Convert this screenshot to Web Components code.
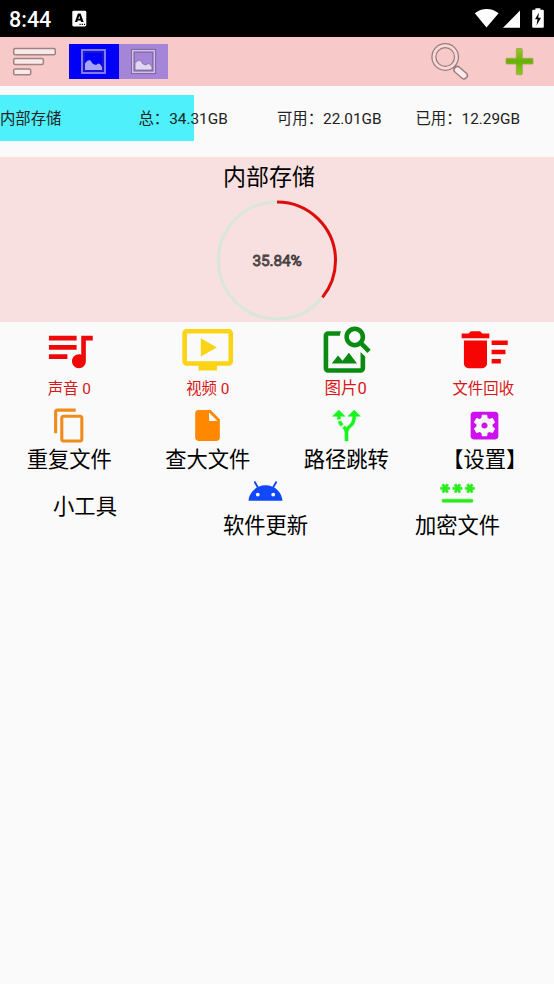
<!DOCTYPE html>
<html lang="zh-CN">
<head>
<meta charset="utf-8">
<title>内部存储</title>
<style>
body{margin:0;background:#fafafa;color:#111;font-family:Roboto,"Noto Sans CJK SC",sans-serif;}
</style>
</head>
<body>
<storage-app></storage-app>
<script>
const define=(name,html,setup)=>customElements.define(name,class extends HTMLElement{
  constructor(){super();this.attachShadow({mode:'open'}).innerHTML=html;}
  connectedCallback(){if(setup)setup(this,this.shadowRoot);}
});

const ICONS={
music:'<path d="M15 6H3v2h12V6zm0 4H3v2h12v-2zM3 16h8v-2H3v2zM17 6v8.18c-.31-.11-.65-.18-1-.18-1.66 0-3 1.34-3 3s1.34 3 3 3 3-1.34 3-3V8h3V6h-5z"/>',
video:'<path d="M21 3H3c-1.11 0-2 .89-2 2v12c0 1.1.89 2 2 2h5v2h8v-2h5c1.1 0 1.99-.9 1.99-2L23 5c0-1.1-.9-2-2-2zm0 14H3V5h18v12zm-5-6l-7 4V7z"/>',
image:'<path d="M18 13v7H4V6h5.02c.05-.71.22-1.38.48-2H4c-1.1 0-2 .9-2 2v14c0 1.1.9 2 2 2h14c1.1 0 2-.9 2-2v-5l-2-2zm-1.5 5h-11l2.75-3.53 1.96 2.36 2.75-3.54zm2.8-9.11c.44-.7.7-1.51.7-2.39C20 4.01 17.99 2 15.5 2S11 4.01 11 6.5s2.01 4.5 4.49 4.5c.88 0 1.7-.26 2.39-.7L21 13.42 22.42 12 19.3 8.89zM15.5 9C14.12 9 13 7.88 13 6.5S14.12 4 15.5 4 18 5.12 18 6.5 16.88 9 15.5 9z"/>',
sweep:'<path d="M15 16h4v2h-4zm0-8h7v2h-7zm0 4h6v2h-6zM3 18c0 1.1.9 2 2 2h6c1.1 0 2-.9 2-2V8H3v10zM14 5h-3l-1-1H6L5 5H2v2h12z"/>',
copy:'<path d="M16 1H4c-1.1 0-2 .9-2 2v14h2V3h12V1zm3 4H8c-1.1 0-2 .9-2 2v14c0 1.1.9 2 2 2h11c1.1 0 2-.9 2-2V7c0-1.1-.9-2-2-2zm0 16H8V7h11v14z"/>',
file:'<path d="M6 2c-1.1 0-1.99.9-1.99 2L4 20c0 1.1.89 2 1.99 2H18c1.1 0 2-.9 2-2V8l-6-6H6zm7 7V3.5L18.5 9H13z"/>',
route:'<path stroke="#16f51c" stroke-width=".35" d="M9.78 11.16l-1.42 1.42c-.68-.69-1.34-1.58-1.79-2.94l1.94-.49c.32.89.77 1.5 1.27 2.01zM11 6L7 2 3 6h3.02c.02.81.08 1.54.19 2.17l1.94-.49C8.08 7.2 8.03 6.63 8.02 6H11zm10 0l-4-4-4 4h2.99c-.1 3.68-1.28 4.75-2.54 5.88-.5.44-1.01.92-1.45 1.55-.34-.49-.73-.88-1.13-1.24L9.46 13.6c.93.85 1.54 1.54 1.54 3.4v5h2v-5c0-2.02.71-2.66 1.79-3.63 1.38-1.24 3.08-2.78 3.2-7.37H21z"/>',
settings:'<path d="M12 10c-1.1 0-2 .9-2 2s.9 2 2 2 2-.9 2-2-.9-2-2-2zm7-7H5c-1.11 0-2 .9-2 2v14c0 1.1.89 2 2 2h14c1.11 0 2-.9 2-2V5c0-1.1-.89-2-2-2zm-1.75 9c0 .23-.02.46-.05.68l1.48 1.16c.13.11.17.3.08.45l-1.4 2.42c-.09.15-.27.21-.43.15l-1.74-.7c-.36.28-.76.51-1.18.69l-.26 1.85c-.03.17-.18.3-.35.3h-2.8c-.17 0-.32-.13-.35-.29l-.26-1.85c-.43-.18-.82-.41-1.18-.69l-1.74.7c-.16.06-.34 0-.43-.15l-1.4-2.42c-.09-.15-.05-.34.08-.45l1.48-1.16c-.03-.23-.05-.46-.05-.69 0-.23.02-.46.05-.68l-1.48-1.16c-.13-.11-.17-.3-.08-.45l1.4-2.42c.09-.15.27-.21.43-.15l1.74.7c.36-.28.76-.51 1.18-.69l.26-1.85c.03-.17.18-.3.35-.3h2.8c.17 0 .32.13.35.29l.26 1.85c.43.18.82.41 1.18.69l1.74-.7c.16-.06.34 0 .43.15l1.4 2.42c.09.15.05.34-.08.45l-1.48 1.16c.03.23.05.46.05.69z"/>',
android:'<path fill-rule="evenodd" d="M17.6 9.48l1.84-3.18c.16-.31.04-.69-.26-.85-.29-.15-.65-.06-.83.22l-1.88 3.24c-2.86-1.21-6.08-1.21-8.94 0L5.65 5.67c-.19-.29-.58-.38-.87-.2-.28.18-.37.54-.22.83L6.4 9.48C3.3 11.25 1.28 14.44 1 18h22c-.28-3.56-2.3-6.75-5.4-8.52zM7 15.25a1.25 1.25 0 1 1 0-2.5 1.25 1.25 0 0 1 0 2.5zm10 0a1.25 1.25 0 1 1 0-2.5 1.25 1.25 0 0 1 0 2.5z"/>',
password:'<g stroke="#28ec1c" stroke-width=".35"><rect x="2" y="17" width="20" height="2" rx=".6"/><path d="M3.15 12.95L4 11.47l.85 1.48 1.3-.75-.85-1.48H7v-1.5H5.3l.85-1.47L4.85 7 4 8.47 3.15 7l-1.3.75.85 1.47H1v1.5h1.7l-.85 1.48 1.3.75zm6.7-.75l1.3.75.85-1.48.85 1.48 1.3-.75-.85-1.48H15v-1.5h-1.7l.85-1.47-1.3-.75L12 8.47 11.15 7l-1.3.75.85 1.47H9v1.5h1.7l-.85 1.48zM23 9.22h-1.7l.85-1.47-1.3-.75L20 8.47 19.15 7l-1.3.75.85 1.47H17v1.5h1.7l-.85 1.48 1.3.75.85-1.48.85 1.48 1.3-.75-.85-1.48H23v-1.5z"/></g>'
};

define('status-bar',`<style>
:host{display:flex;align-items:center;height:37px;background:#000;color:#fff;box-sizing:border-box;padding:0 9px}
.time{font:500 21.500px/37px Roboto,sans-serif;width:63px;padding-top:1px;box-sizing:border-box;height:37px}
svg{display:block}
.right{margin-left:auto}
</style>
<span class="time"><slot></slot></span>
<svg width="15" height="37" viewBox="72 0 15 37"><rect x="72.3" y="10.8" width="14" height="15.6" rx="1.4" fill="#fff"/><path fill="#000" fill-rule="evenodd" d="M77.900 13.500h2.700l3 8.500h-2.500l-.5-1.600h-2.800l-.5 1.600h-2.400zM79.200 15.800l-.9 2.900h1.800z"/><path d="M79.5 24.300h1.200m1 0h1.2m1 0h1.2" stroke="#000" stroke-width="1.2"/></svg>
<svg class="right" width="72" height="37" viewBox="473 0 72 37" fill="#fff"><path d="M486.5 27.5 474.8 13.2C481.5 7.5 492 7.5 498.6 13.2zM503 27.7h17V10.6zM533.2 9.8h2.2V8.2h5v1.6h2.4q1 0 1 1v16q0 1-1 1h-9.600q-1 0-1-1v-16q0-1 1-1z"/><path fill="#000" d="M539 12.500l-4 6.700h2.500l-1 6.300 4.500-7.700h-2.800z"/></svg>`);

define('tool-bar',`<style>
:host{display:flex;align-items:center;height:49px;background:#f8c9c9;box-sizing:border-box;padding-right:20px}
svg{display:block}.menu{margin:0 13px 0 12px}
.tab{width:49.500px;height:35px;display:grid;place-items:center;background:#0000f8}
.tab+.tab{background:#a585d8}.search{margin-left:auto;margin-right:33px}
</style>
<svg class="menu" width="44" height="49" viewBox="12 37 44 49" fill="#fae9e9" stroke="#a08282" stroke-width="1.5"><rect x="13.7" y="48.500" width="41.600" height="6.200" rx="1.500"/><rect x="13.700" y="58.600" width="29.700" height="6" rx="1.500"/><rect x="13.700" y="69" width="17" height="5.800" rx="1.500"/></svg>
<div class="tab"><svg width="27" height="27" viewBox="0 0 27 27"><rect x="2" y="2" width="23" height="23" fill="none" stroke="#8e87ef" stroke-width="1.8"/><rect x="4" y="4" width="19" height="19" fill="none" stroke="#302bb0" stroke-width="1"/><path d="M5 22v-6.500l2-2.500 3-1 3 4 3 1 2-1.500 2 .5 2 3v3z" fill="#a6a2f6"/></svg></div>
<div class="tab"><svg width="27" height="27" viewBox="0 0 27 27"><rect x="1.500" y="1.500" width="24" height="24" fill="none" stroke="#806b9f" stroke-width="1.200"/><rect x="2.800" y="2.800" width="21.400" height="21.400" fill="none" stroke="#d6c5ee" stroke-width="1.500"/><rect x="4.200" y="4.200" width="18.600" height="18.600" fill="none" stroke="#806b9f" stroke-width="1.200"/><path d="M5 22v-6.500l2-2.500 3-1 3 4 3 1 2-1.500 2 .5 2 3v3z" fill="#e2d6f4" stroke="#806b9f" stroke-width=".8"/></svg></div>
<svg class="search" width="40" height="49" viewBox="431 37 40 49" fill="none" stroke-linecap="round"><path d="M454 66l4 4" stroke="#9a7c7c" stroke-width="4"/><path d="M457.300 69.800l6.700 5.700" stroke="#9a7c7c" stroke-width="8"/><path d="M457.500 70l6.400 5.400" stroke="#faeaea" stroke-width="5.200"/><circle cx="445.200" cy="57" r="11.300" stroke="#9a7c7c" stroke-width="5.200"/><circle cx="445.200" cy="57" r="11.300" stroke="#f8d8d8" stroke-width="2.700"/></svg>
<svg width="30" height="49" viewBox="504 37 30 49"><defs><linearGradient id="g" x2="0" y2="1"><stop stop-color="#9cc52c"/><stop offset=".5" stop-color="#65b205"/><stop offset="1" stop-color="#8dc91c"/></linearGradient></defs><path d="M517 48.500h4.600q.7 0 .7.700v9.100h10q.7 0 .7.700v4.300q0 .7-.7.700h-10V74q0 .7-.7.700H517q-.7 0-.7-.7V64h-9.600q-.7 0-.7-.7V59q0-.7.700-.7h9.600v-9.100q0-.7.700-.7z" fill="url(#g)" stroke="#9aa64a" stroke-width=".8"/></svg>`);

define('usage-row',`<style>
:host{display:block;height:71px;box-sizing:border-box;padding-top:9px}
.bar{height:46px;background:linear-gradient(to right,#4ef0fc 194px,transparent 194px);display:grid;grid-template-columns:repeat(4,1fr);align-items:center;font-size:15.35px;line-height:22px;color:#222;padding-top:2px;box-sizing:border-box}
</style><div class="bar"><slot></slot></div>`);

define('usage-ring',`<style>
:host{display:flex;flex-direction:column;align-items:center;height:165px;background:#f8e0e0}
.title{font-size:23px;line-height:40px;height:42px;color:#000;padding:1px 16px 0 0;box-sizing:border-box}
.ring{display:grid;place-items:center;width:124px;height:123px}
svg,.value{grid-area:1/1}.value{font-size:15.4px;line-height:20px;color:#756c6c;-webkit-text-stroke:.8px #403838;letter-spacing:-.15px;padding-top:1px}
</style><div class="title"><slot></slot></div>
<div class="ring"><svg width="124" height="123" viewBox="0 0 124 123" fill="none" stroke-width="3"><circle cx="62" cy="61.500" r="58.500" stroke="#dbe6db"/><circle class="arc" cx="62" cy="61.500" r="58.500" stroke="#e00b0b" pathLength="100" transform="rotate(-90 62 61.500)"/></svg><span class="value"></span></div>`,
(el,root)=>{const v=el.getAttribute('value');root.querySelector('.value').textContent=v+'%';root.querySelector('.arc').setAttribute('stroke-dasharray',v+' 100');});

define('app-tile',`<style>
:host{display:flex;flex-direction:column;align-items:center;--size:37px;font-size:21.3px;line-height:32px;color:#000;white-space:nowrap}
:host([large]){--size:55.4px;font-size:15.4px;line-height:24px;color:#d81818}
svg{width:var(--size);height:var(--size);display:block;flex:none}
span{font-size:var(--label,inherit);padding-right:var(--nudge,0)}
</style><svg viewBox="0 0 24 24"></svg><span><slot></slot></span>`,
(el,root)=>{const s=root.querySelector('svg');const i=el.getAttribute('icon');if(i){s.innerHTML=ICONS[i];s.style.fill=el.getAttribute('tint');}else s.remove();});

define('tile-row',`<style>
:host{display:grid;grid-template-columns:var(--cols,repeat(4,1fr));align-items:start}
</style><slot></slot>`);

define('storage-app',`<style>
:host{display:block;width:554px;height:984px;overflow:hidden;background:#fafafa}
.first{height:84.500px}.second{height:66.500px}
.third{--cols:170px 191px 193px}.plain{padding-top:18px}
.wide{--label:16.500px;--nudge:1px}.shift{--nudge:3px}
</style>
<status-bar>8:44</status-bar>
<tool-bar></tool-bar>
<usage-row><span>内部存储</span><span>总：34.31GB</span><span>可用：22.01GB</span><span>已用：12.29GB</span></usage-row>
<usage-ring value="35.84">内部存储</usage-ring>
<tile-row class="first"><app-tile large icon="music" tint="#ee0808">声音 0</app-tile><app-tile large icon="video" tint="#fad415">视频 0</app-tile><app-tile large class="wide" icon="image" tint="#0a8a10">图片0</app-tile><app-tile large class="shift" icon="sweep" tint="#f70505">文件回收</app-tile></tile-row>
<tile-row class="second"><app-tile icon="copy" tint="#ee8c1c">重复文件</app-tile><app-tile icon="file" tint="#ff8800">查大文件</app-tile><app-tile icon="route" tint="#16f51c">路径跳转</app-tile><app-tile icon="settings" tint="#cf10ee">【设置】</app-tile></tile-row>
<tile-row class="third"><app-tile class="plain">小工具</app-tile><app-tile icon="android" tint="#1048fa">软件更新</app-tile><app-tile icon="password" tint="#28ec1c">加密文件</app-tile></tile-row>`);
</script>
</body>
</html>
